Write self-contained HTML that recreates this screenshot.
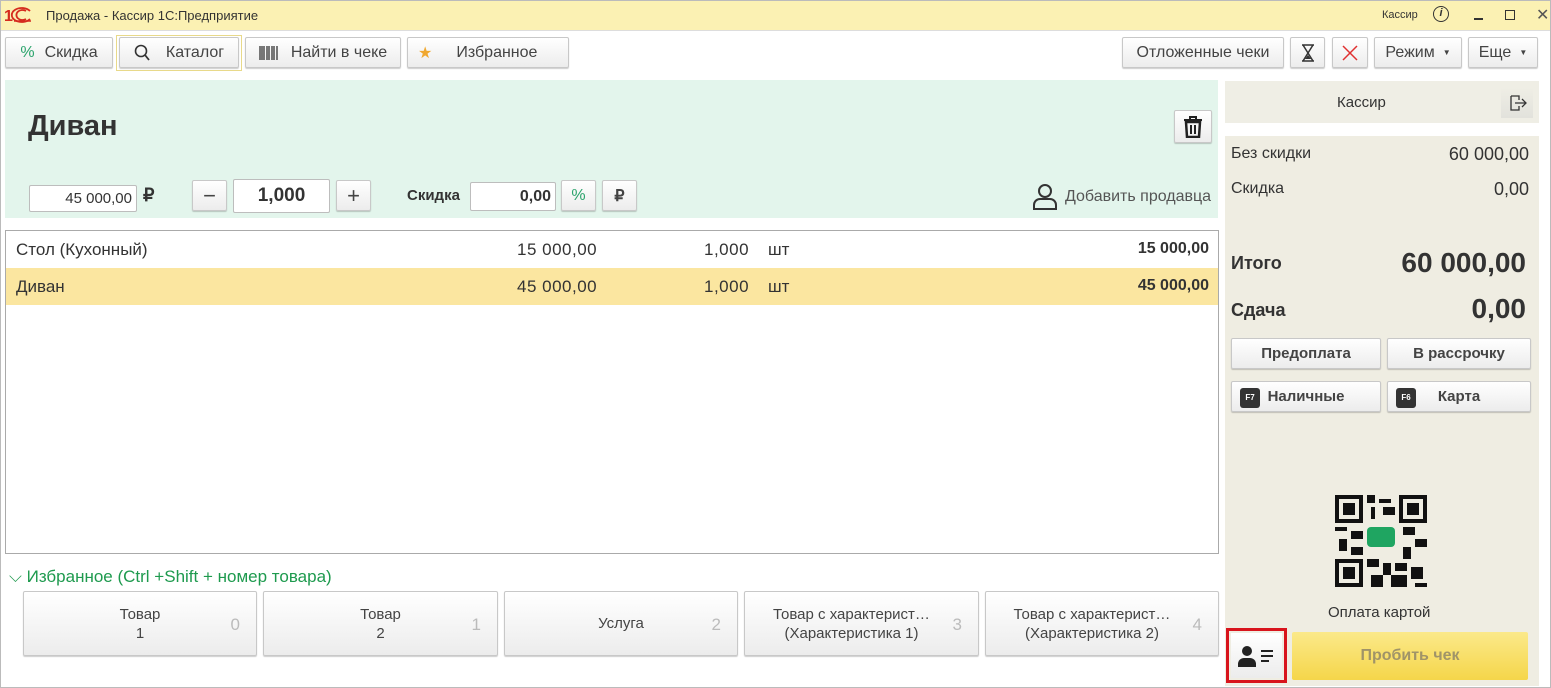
<!DOCTYPE html><html><head><meta charset="utf-8"><style>
*{box-sizing:border-box;margin:0;padding:0}
body{width:1551px;height:688px;overflow:hidden;background:#fff;font-family:"Liberation Sans",sans-serif;color:#333;position:relative;font-size:15px}
.a{position:absolute}
.btn{position:absolute;background:linear-gradient(#fff,#ececec);border:1px solid #c8c8c8;border-radius:2px;box-shadow:0 1px 1px rgba(0,0,0,.2);display:flex;align-items:center;justify-content:center;font-size:16px;color:#444;text-align:center}
.inp{position:absolute;background:#fff;border:1px solid #bdbdbd;border-radius:2px;display:flex;align-items:center;justify-content:flex-end;padding-right:4px}
.fk{display:inline-block;width:20px;height:20px;background:#333;color:#fff;font-size:8px;border-radius:3px;text-align:center;line-height:20px;font-weight:bold;position:absolute;left:8px;top:6px}
.fn{position:absolute;right:16px;top:23px;color:#bbb;font-size:17px}
</style></head><body>
<div class="a" style="left:0;top:0;width:1551px;height:688px;border:1px solid #bbb"></div>
<div class="a" style="left:1px;top:1px;width:1549px;height:30px;background:#fbf1b3;border-bottom:1px solid #ddd"></div>
<svg class="a" style="left:4px;top:7px" width="28" height="16"><text x="0" y="14" font-family="Liberation Sans" font-weight="bold" font-size="16" fill="#d52b1e">1</text><path d="M22 4a6 5 0 1 0 0 8M26 4a10 7 0 1 0 0 8" fill="none" stroke="#d52b1e" stroke-width="1.8"/><path d="M10 14h17" stroke="#d52b1e" stroke-width="1.5"/></svg>
<div class="a" style="left:46px;top:8px;font-size:13px;color:#333">Продажа - Кассир 1С:Предприятие</div>
<div class="a" style="left:1382px;top:9px;font-size:11px">Кассир</div>
<div class="a" style="left:1433px;top:6px;width:16px;height:16px;border:1.5px solid #333;border-radius:50%;font-size:11px;text-align:center;line-height:13px;font-weight:bold;font-style:italic">i</div>
<div class="a" style="left:1474px;top:18px;width:9px;height:1.5px;background:#333"></div>
<div class="a" style="left:1505px;top:10px;width:10px;height:10px;border:1.5px solid #333"></div>
<div class="a" style="left:1536px;top:5px;font-size:16px;color:#555">✕</div>

<div class="btn" style="left:5px;top:37px;width:108px;height:31px"><span style="color:#2aa36b;margin-right:10px">%</span>Скидка</div>
<div class="a" style="left:116px;top:35px;width:126px;height:36px;border:1px solid #e8d98a"></div>
<div class="btn" style="left:119px;top:37px;width:120px;height:31px"><svg width="16" height="18" style="margin-right:16px"><circle cx="7" cy="7" r="5.5" fill="none" stroke="#333" stroke-width="1.6"/><path d="M11 11l4 5" stroke="#333" stroke-width="1.8"/></svg>Каталог</div>
<div class="btn" style="left:245px;top:37px;width:156px;height:31px"><svg width="20" height="14" style="margin-right:12px"><path d="M1 0v14M3 0v14M5 0v14M8 0v14M10 0v14M13 0v14M15 0v14M18 0v14" stroke="#333" stroke-width="1.3"/></svg>Найти в чеке</div>
<div class="btn" style="left:407px;top:37px;width:162px;height:31px;justify-content:flex-start;padding-left:10px"><span style="color:#f0a830;margin-right:24px">★</span>Избранное</div>
<div class="btn" style="left:1122px;top:37px;width:162px;height:31px">Отложенные чеки</div>
<div class="btn" style="left:1290px;top:37px;width:35px;height:31px"><svg width="14" height="18"><path d="M1 1h12M1 17h12M2 1l10 16M12 1L2 17" stroke="#333" stroke-width="1.5" fill="none"/><path d="M4 15h6l-3-4z" fill="#333"/></svg></div>
<div class="btn" style="left:1332px;top:37px;width:36px;height:31px"><svg width="16" height="16"><path d="M1 1l14 14M15 1L1 15" stroke="#e03030" stroke-width="1.5"/></svg></div>
<div class="btn" style="left:1374px;top:37px;width:88px;height:31px">Режим <span style="font-size:8px;margin-left:8px">▼</span></div>
<div class="btn" style="left:1468px;top:37px;width:70px;height:31px">Еще <span style="font-size:8px;margin-left:8px">▼</span></div>

<div class="a" style="left:5px;top:80px;width:1213px;height:138px;background:#e3f5ec"></div>
<div class="a" style="left:28px;top:110px;font-size:29px;font-weight:bold;color:#333">Диван</div>
<div class="btn" style="left:1174px;top:110px;width:38px;height:33px"><svg width="20" height="22"><path d="M1 4h18M7 4V1h6v3" stroke="#222" stroke-width="2" fill="none"/><path d="M3 6h14l-1 15H4z" fill="none" stroke="#222" stroke-width="2.5"/><path d="M8 9v9M12 9v9" stroke="#222" stroke-width="2"/></svg></div>
<div class="inp" style="left:29px;top:185px;width:108px;height:27px;font-size:15px">45 000,00</div>
<div class="a" style="left:143px;top:185px;font-size:18px;font-weight:bold">₽</div>
<div class="btn" style="left:192px;top:180px;width:35px;height:31px;font-size:22px">−</div>
<div class="inp" style="left:233px;top:179px;width:97px;height:34px;justify-content:center;padding:0;font-size:19px;font-weight:bold">1,000</div>
<div class="btn" style="left:336px;top:180px;width:35px;height:31px;font-size:22px">+</div>
<div class="a" style="left:407px;top:187px;font-weight:bold;font-size:15px">Скидка</div>
<div class="inp" style="left:470px;top:182px;width:86px;height:29px;font-weight:bold;font-size:16px">0,00</div>
<div class="btn" style="left:561px;top:180px;width:35px;height:31px;color:#2aa36b">%</div>
<div class="btn" style="left:602px;top:180px;width:35px;height:31px;font-weight:bold">₽</div>
<svg class="a" style="left:1032px;top:183px" width="26" height="28"><circle cx="13" cy="8" r="6" fill="none" stroke="#333" stroke-width="2"/><path d="M2 26v-4a6 6 0 0 1 6-6h10a6 6 0 0 1 6 6v4z" fill="none" stroke="#333" stroke-width="2"/></svg>
<div class="a" style="left:1065px;top:188px;font-size:16px;color:#555">Добавить продавца</div>

<div class="a" style="left:5px;top:230px;width:1214px;height:324px;border:1px solid #aaa"></div>
<div class="a" style="left:6px;top:268px;width:1212px;height:37px;background:#fbe6a0"></div>
<div class="a" style="left:16px;top:240px;font-size:17px">Стол (Кухонный)</div>
<div class="a" style="left:517px;top:240px;font-size:17px;letter-spacing:.5px">15 000,00</div>
<div class="a" style="left:704px;top:240px;font-size:17px;letter-spacing:.5px">1,000</div>
<div class="a" style="left:768px;top:240px;font-size:17px">шт</div>
<div class="a" style="right:342px;top:240px;font-size:16px;font-weight:bold">15 000,00</div>
<div class="a" style="left:16px;top:277px;font-size:17px">Диван</div>
<div class="a" style="left:517px;top:277px;font-size:17px;letter-spacing:.5px">45 000,00</div>
<div class="a" style="left:704px;top:277px;font-size:17px;letter-spacing:.5px">1,000</div>
<div class="a" style="left:768px;top:277px;font-size:17px">шт</div>
<div class="a" style="right:342px;top:277px;font-size:16px;font-weight:bold">45 000,00</div>

<div class="a" style="left:9px;top:567px;font-size:17px;color:#1e9a4e">⌵ Избранное (Ctrl +Shift + номер товара)</div>
<div class="btn" style="left:23px;top:591px;width:234px;height:65px;font-size:15px;line-height:19px"><span>Товар<br>1</span><span class="fn">0</span></div>
<div class="btn" style="left:263px;top:591px;width:235px;height:65px;font-size:15px;line-height:19px"><span>Товар<br>2</span><span class="fn">1</span></div>
<div class="btn" style="left:504px;top:591px;width:234px;height:65px;font-size:15px">Услуга<span class="fn">2</span></div>
<div class="btn" style="left:744px;top:591px;width:235px;height:65px;font-size:15px;line-height:19px;padding-right:20px"><span>Товар с характерист…<br>(Характеристика 1)</span><span class="fn">3</span></div>
<div class="btn" style="left:985px;top:591px;width:234px;height:65px;font-size:15px;line-height:19px;padding-right:20px"><span>Товар с характерист…<br>(Характеристика 2)</span><span class="fn">4</span></div>

<div class="a" style="left:1225px;top:81px;width:314px;height:42px;background:#efeee5"></div>
<div class="a" style="left:1337px;top:94px;font-size:15px">Кассир</div>
<div class="a" style="left:1501px;top:88px;width:32px;height:30px;background:linear-gradient(#efeee5,#e2e2dc)"><svg width="32" height="30"><path d="M10 8h8v4M10 8v14h8v-4M14 15h11M21 11l4 4-4 4" fill="none" stroke="#333" stroke-width="1.3"/></svg></div>
<div class="a" style="left:1225px;top:136px;width:314px;height:550px;background:#efede2"></div>
<div class="a" style="left:1231px;top:145px;font-size:16px">Без скидки</div>
<div class="a" style="right:22px;top:144px;font-size:18px">60 000,00</div>
<div class="a" style="left:1231px;top:180px;font-size:16px">Скидка</div>
<div class="a" style="right:22px;top:179px;font-size:18px">0,00</div>
<div class="a" style="left:1231px;top:253px;font-size:18px;font-weight:bold">Итого</div>
<div class="a" style="right:25px;top:247px;font-size:28px;font-weight:bold">60 000,00</div>
<div class="a" style="left:1231px;top:300px;font-size:18px;font-weight:bold">Сдача</div>
<div class="a" style="right:25px;top:293px;font-size:28px;font-weight:bold">0,00</div>
<div class="btn" style="left:1231px;top:338px;width:150px;height:31px;font-weight:bold;font-size:15px">Предоплата</div>
<div class="btn" style="left:1387px;top:338px;width:144px;height:31px;font-weight:bold;font-size:15px">В рассрочку</div>
<div class="btn" style="left:1231px;top:381px;width:150px;height:31px;font-weight:bold;font-size:15px"><span class="fk">F7</span>Наличные</div>
<div class="btn" style="left:1387px;top:381px;width:144px;height:31px;font-weight:bold;font-size:15px"><span class="fk">F6</span>Карта</div>
<svg class="a" style="left:1335px;top:495px" width="92" height="92" viewBox="0 0 23 23">
<g fill="#111"><path d="M0 0h7v7h-7zM1 1v5h5v-5zM2 2h3v3h-3z" fill-rule="evenodd"/><path d="M16 0h7v7h-7zM17 1v5h5v-5zM18 2h3v3h-3z" fill-rule="evenodd"/><path d="M0 16h7v7h-7zM1 17v5h5v-5zM2 18h3v3h-3z" fill-rule="evenodd"/>
<rect x="8" y="0" width="2" height="2"/><rect x="11" y="1" width="3" height="1"/><rect x="9" y="3" width="1" height="3"/><rect x="12" y="3" width="3" height="2"/><rect x="0" y="8" width="3" height="1"/><rect x="4" y="9" width="3" height="2"/><rect x="1" y="11" width="2" height="3"/><rect x="4" y="13" width="3" height="2"/><rect x="17" y="8" width="3" height="2"/><rect x="20" y="11" width="3" height="2"/><rect x="17" y="13" width="2" height="3"/><rect x="8" y="16" width="3" height="2"/><rect x="12" y="17" width="2" height="3"/><rect x="9" y="20" width="3" height="3"/><rect x="15" y="17" width="3" height="2"/><rect x="19" y="18" width="3" height="3"/><rect x="14" y="20" width="4" height="3"/><rect x="20" y="22" width="3" height="1"/></g>
<rect x="8" y="8" width="7" height="5" rx="1" fill="#1fa561"/></svg>
<div class="a" style="left:1328px;top:604px;font-size:15px">Оплата картой</div>
<div class="a" style="left:1292px;top:632px;width:236px;height:48px;background:linear-gradient(#fbe98a,#f5d64a);border-radius:2px;color:#a09468;font-weight:bold;font-size:16px;text-align:center;line-height:48px">Пробить чек</div>
<div class="a" style="left:1226px;top:628px;width:61px;height:55px;border:3px solid #d8141c"></div>
<div class="a" style="left:1231px;top:633px;width:51px;height:45px;background:linear-gradient(#fff,#ececec)"></div>
<svg class="a" style="left:1238px;top:645px" width="38" height="22"><circle cx="9" cy="6" r="5" fill="#222"/><path d="M0 22v-3a6 6 0 0 1 6-6h6a6 6 0 0 1 6 6v3z" fill="#222"/><rect x="23" y="5" width="12" height="2" fill="#222"/><rect x="23" y="10" width="12" height="2" fill="#222"/><rect x="23" y="15" width="8" height="2" fill="#222"/></svg>
</body></html>
